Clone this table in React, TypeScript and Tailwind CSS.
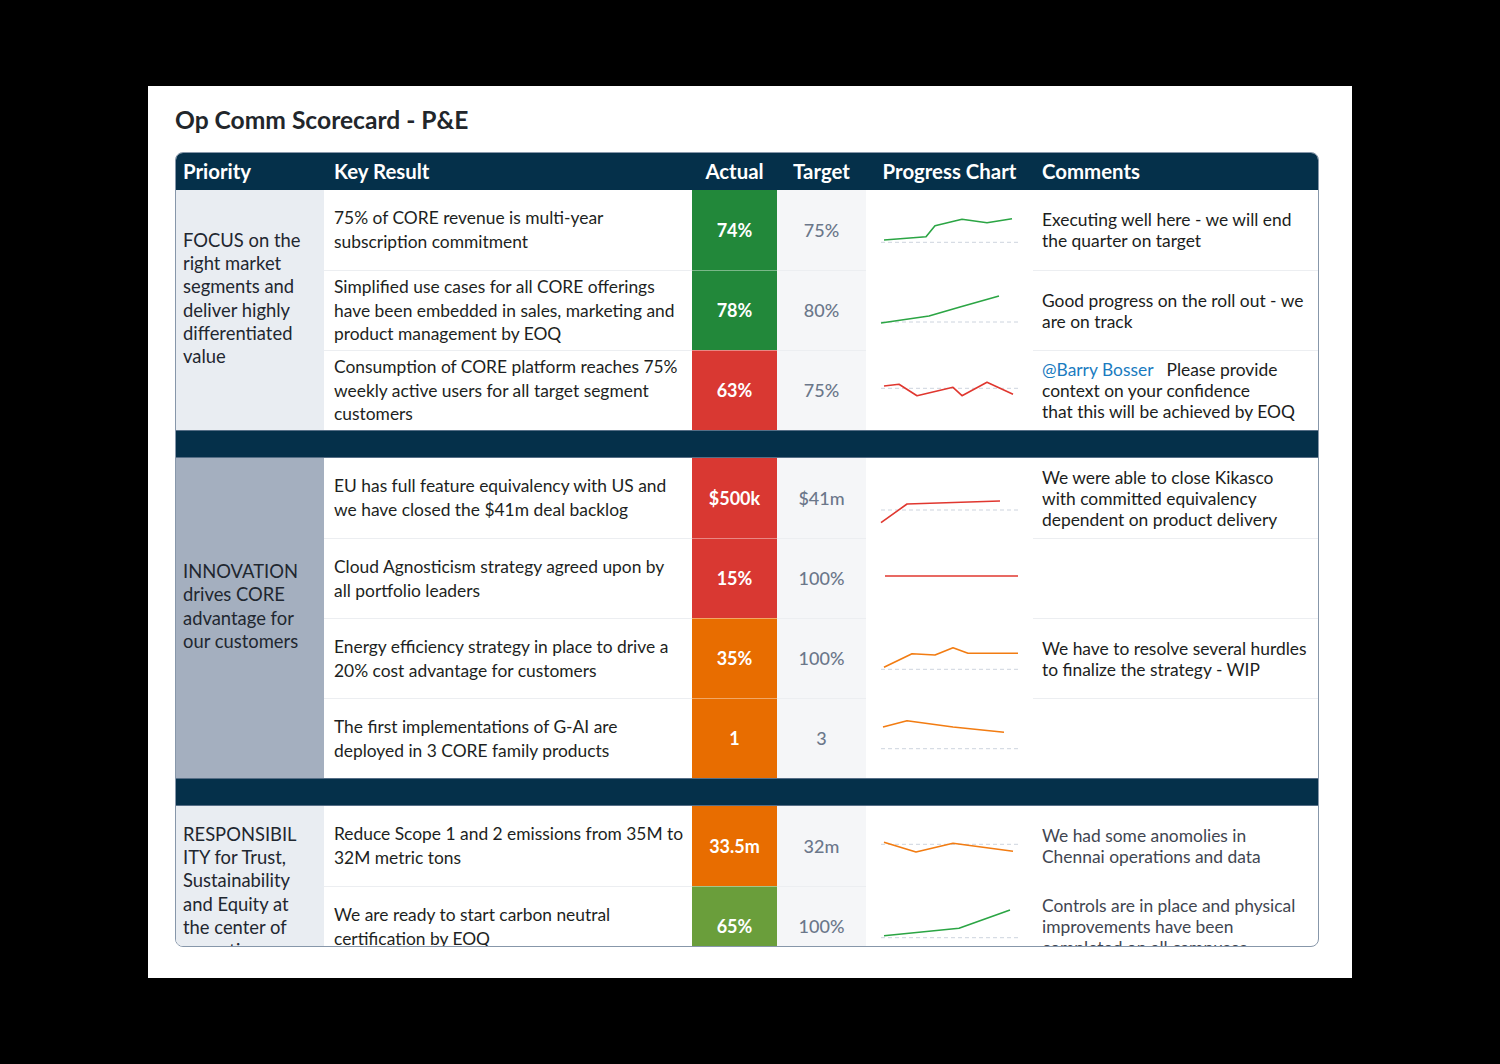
import React from "react";

type Row = {
  kr: React.ReactNode;
  actual: string;
  tone: "green" | "red" | "orange" | "lime";
  target: string;
  pts: [number, number][];
  base?: number;
  comment?: React.ReactNode;
};

type Section = {
  priority: string;
  bg: string;
  top?: boolean;
  rows: Row[];
};

const tones = {
  green: { cell: "bg-[#22883a]", line: "#2ba544" },
  red: { cell: "bg-[#d93832]", line: "#e0372f" },
  orange: { cell: "bg-[#e86d00]", line: "#f27c12" },
  lime: { cell: "bg-[#6a9e3b]", line: "#2ba544" },
};

const spans: Record<number, string> = { 2: "row-span-2", 3: "row-span-3", 4: "row-span-4" };

const sections: Section[] = [
  {
    priority: "FOCUS on the right market segments and deliver highly differentiated value",
    bg: "bg-[#e9edf2]",
    rows: [
      {
        kr: "75% of CORE revenue is multi-year subscription commitment",
        actual: "74%",
        tone: "green",
        target: "75%",
        pts: [[18, 50], [60, 46.7], [69, 35.7], [96, 29.3], [121, 32.7], [146, 28.7]],
        base: 52.3,
        comment: "Executing well here - we will end the quarter on target",
      },
      {
        kr: "Simplified use cases for all CORE offerings have been embedded in sales, marketing and product management by EOQ",
        actual: "78%",
        tone: "green",
        target: "80%",
        pts: [[15, 53], [63, 46], [94, 37], [133, 26]],
        base: 52,
        comment: "Good progress on the roll out - we are on track",
      },
      {
        kr: "Consumption of CORE platform reaches 75% weekly active users for all target segment customers",
        actual: "63%",
        tone: "red",
        target: "75%",
        pts: [[18, 36], [33, 34.3], [51, 45.7], [87, 37.3], [96, 45.7], [121, 32.3], [147, 44.3]],
        base: 38.3,
        comment: (
          <>
            <span className="text-[#1a7bbf] mr-[13px]">@Barry Bosser</span>Please provide
            <br />
            context on your confidence
            <br />
            that this will be achieved by EOQ
          </>
        ),
      },
    ],
  },
  {
    priority: "INNOVATION drives CORE advantage for our customers",
    bg: "bg-[#a4afbf]",
    rows: [
      {
        kr: "EU has full feature equivalency with US and we have closed the $41m deal backlog",
        actual: "$500k",
        tone: "red",
        target: "$41m",
        pts: [[15, 64.7], [41, 46], [134, 43]],
        base: 52,
        comment: (
          <>
            We were able to close Kikasco
            <br />
            with committed equivalency dependent on product delivery
          </>
        ),
      },
      {
        kr: (
          <>
            Cloud Agnosticism strategy agreed upon by
            <br />
            all portfolio leaders
          </>
        ),
        actual: "15%",
        tone: "red",
        target: "100%",
        pts: [[19, 38], [152, 38]],
      },
      {
        kr: "Energy efficiency strategy in place to drive a 20% cost advantage for customers",
        actual: "35%",
        tone: "orange",
        target: "100%",
        pts: [[18, 49.3], [46, 35.7], [69, 37], [87, 29.7], [102, 35.3], [152, 35.3]],
        base: 51.3,
        comment: "We have to resolve several hurdles to finalize the strategy - WIP",
      },
      {
        kr: "The first implementations of G-AI are deployed in 3 CORE family products",
        actual: "1",
        tone: "orange",
        target: "3",
        pts: [[17, 29], [41, 22.7], [87, 29], [138, 34.3]],
        base: 50.7,
      },
    ],
  },
  {
    priority: "RESPONSIBILITY for Trust, Sustainability and Equity at the center of operations and culture",
    bg: "bg-[#e9edf2]",
    top: true,
    rows: [
      {
        kr: "Reduce Scope 1 and 2 emissions from 35M to 32M metric tons",
        actual: "33.5m",
        tone: "orange",
        target: "32m",
        pts: [[18, 36.3], [50, 46], [87, 37.3], [147, 45.3]],
        base: 38.3,
        comment: (
          <span className="text-[#3f4651]">
            We had some anomolies in
            <br />
            Chennai operations and data
          </span>
        ),
      },
      {
        kr: "We are ready to start carbon neutral certification by EOQ",
        actual: "65%",
        tone: "lime",
        target: "100%",
        pts: [[18, 49.7], [93, 42.3], [144, 24]],
        base: 51.7,
        comment: (
          <span className="text-[#3f4651]">
            Controls are in place and physical improvements have been completed on all campuses
          </span>
        ),
      },
    ],
  },
];

function Spark({ pts, base, color }: { pts: [number, number][]; base?: number; color: string }) {
  return (
    <svg width="167" height="80" viewBox="0 0 167 80">
      {base !== undefined && (
        <line x1="15" y1={base} x2="152" y2={base} stroke="#cdd4de" strokeWidth="1" strokeDasharray="4 3" />
      )}
      <polyline points={pts.map((p) => p.join(",")).join(" ")} fill="none" stroke={color} strokeWidth="1.6" strokeLinejoin="round" />
    </svg>
  );
}

export default function App() {
  const cols = "grid grid-cols-[148px_368px_85px_89px_167px_285px]";
  return (
    <div className="min-h-screen bg-black pt-[86px] pl-[148px]" style={{ fontFamily: "Lato, 'Open Sans', sans-serif" }}>
      <div className="w-[1204px] h-[892px] bg-white px-[27px] pt-[18px]">
        <h1 className="text-[24.6px] leading-[32px] font-bold text-[#22262b] mb-[16px]">Op Comm Scorecard - P&amp;E</h1>

        <div className="w-[1144px] h-[795px] border border-[#8797aa] rounded-lg overflow-hidden">
          <div className={`${cols} h-[37px] pb-[1px] bg-[#05304a] text-white font-bold text-[20.4px]`}>
            <div className="flex items-center pl-[7px]">Priority</div>
            <div className="flex items-center pl-[10px]">Key Result</div>
            <div className="flex items-center justify-center">Actual</div>
            <div className="flex items-center justify-center">Target</div>
            <div className="flex items-center justify-center">Progress Chart</div>
            <div className="flex items-center pl-[9px]">Comments</div>
          </div>

          {sections.map((s, si) => (
            <div key={si}>
              {si > 0 && <div className="h-[28px] bg-[#05304a] border-y border-[#566e86]" />}
              <div className={`${cols} auto-rows-[80px]`}>
                <div
                  className={`${spans[s.rows.length]} ${s.bg} flex ${s.top ? "items-start pt-[17px]" : "items-center pb-[23px]"} pl-[7px] pr-[23.5px] text-[18.4px] leading-[23.2px] text-[#1f2730] break-words`}
                >
                  <div className="min-w-0">{s.priority}</div>
                </div>
                {s.rows.map((r, ri) => (
                  <React.Fragment key={ri}>
                    <div
                      className={`flex items-center pl-[10px] pr-[7px] text-[17.4px] leading-[23.7px] text-[#1d1f22] ${ri > 0 ? "border-t border-[#eceef1]" : ""}`}
                    >
                      <div>{r.kr}</div>
                    </div>
                    <div
                      className={`flex items-center justify-center text-white font-bold text-[18px] ${tones[r.tone].cell} ${ri > 0 ? "border-t border-white/40" : ""}`}
                    >
                      {r.actual}
                    </div>
                    <div
                      className={`flex items-center justify-center bg-[#f5f6f8] text-[#6b778a] font-medium text-[18px] ${ri > 0 ? "border-t border-[#eceef1]" : ""}`}
                    >
                      {r.target}
                    </div>
                    <div className="flex items-center">
                      <Spark pts={r.pts} base={r.base} color={tones[r.tone].line} />
                    </div>
                    <div
                      className={`flex items-center pl-[9px] pr-[10px] text-[17.4px] leading-[21px] text-[#1b1d20] ${ri > 0 && !s.top ? "border-t border-[#eceef1]" : ""}`}
                    >
                      <div>{r.comment}</div>
                    </div>
                  </React.Fragment>
                ))}
              </div>
            </div>
          ))}
        </div>
      </div>
    </div>
  );
}
